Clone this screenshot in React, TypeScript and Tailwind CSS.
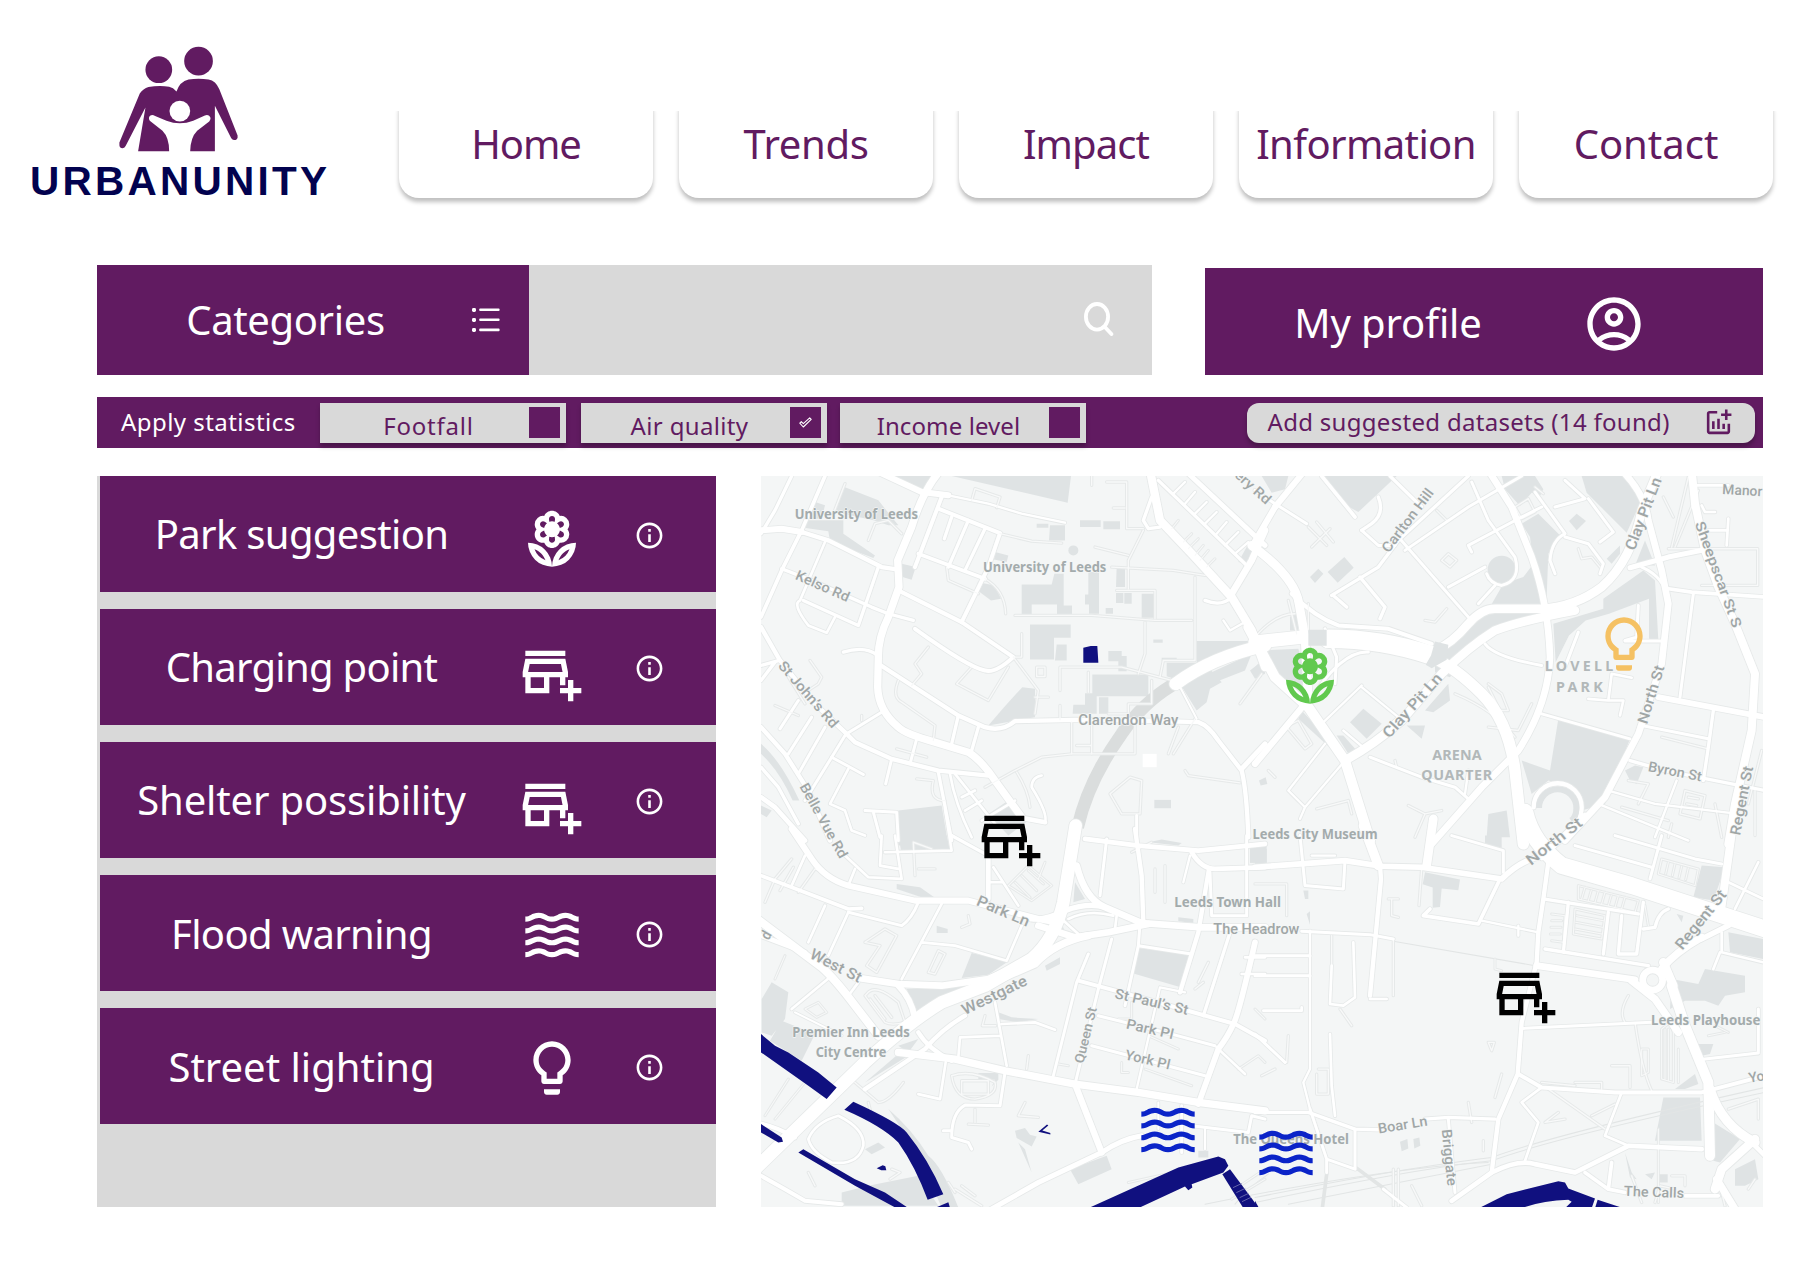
import React from "react";
import {
  MdOutlineAccountCircle,
  MdOutlineAddchart,
  MdOutlineLocalFlorist,
  MdOutlineAddBusiness,
  MdWaves,
  MdLightbulbOutline,
  MdInfoOutline,
} from "react-icons/md";

/* ---------- map data: four tiles that share one 3x unit grid ---------- */

type Road = [number, string];
type Label = [number, number, number, string, number, number, "poi" | "road" | "area"];
type Tile = { x: number; y: number; areas: string[]; roads: Road[]; paths: string[]; water: string[]; labels: Label[] };

const NW: Tile = {
  x: 0,
  y: 0,
  areas: [
    "M400 17H548L510 75Z", "M590 17H948L938 97Z", "M268 50L370 90 430 165 400 165 355 150 240 125Z",
    "M180 95l30 10-10 40-45 0z M150 150h115v40l95 65-5 8-130-50-5-30-68-10z",
    "M440 280l42 10-12 38-40-12z", "M668 335l50 10 20 40-30 5-40-30z",
    "M845 160h35v12h-35z M885 165h45v45h-48z M975 150h62v20h-62z M1045 153h50v24h-50z",
    "M940 240a15 15 0 1 0 30 0a15 15 0 1 0-30 0z", "M720 245l40 10-5 20-38-8z",
    "M800 342h90l8-32h28v95h25v27h-45v-30h-76v30h-30z", "M1000 305h32v125h-30v-28h-12v-30h10z",
    "M1085 290h25v60h-27z M1083 368h22v30h-22z M1108 368h22v32h-22z M1160 370h38v72h-38z M1052 413h22v17h-22z",
    "M825 462h122v40h-50v65h-72z M905 522h30v48h-35z",
    "M1060 542h40v15h15v45h-25v-30h-30z M1195 507h28v10h-28z M1220 562h45v10h-45z",
    "M1012 612h168v65h-168z", "M955 703h35v-35h35v62h-72z M1032 680h28v50h-28z",
    "M747 710l55-60 38 5v85l-140 25z", "M1325 512h165l-100 60-110 60-45-15 0-40h90z",
    "M1275 640l85-50 40 45-35 20-10 40-30 25z", "M1370 605l120-55-20 50-90 35z", "M1485 600l45-35v45l-30 15z",
    "M1198 988h50v25h-50z", "M430 1020l130-15 20 120h-150z", "M700 1030l60-40 60 60-60 45z",
    "M18 820q60 50 115 170l-20 0q-40-90-95-140z", "M18 1005l32 15-15 20-17-10z", "M1450 275l25-45 20 0 5 40-25 10z",
  ],
  roads: [
    [22, "M548 10Q500 70 470 170L428 270 432 350 400 440Q370 500 370 560L368 650Q370 720 430 770Q450 790 540 815L640 845Q680 870 720 930L800 1040"],
    [14, "M790 1040L870 1055"], [18, "M360 0L500 65 580 75"], [18, "M18 180L80 175 140 185"], [13, "M140 185L220 210 380 290 425 297"],
    [7, "M580 75L700 100 800 130 930 157"], [10, "M110 17L60 120 18 190"], [11, "M210 17L140 180 80 300 18 440"],
    [10, "M80 295L170 330 350 410 400 430 475 450"], [10, "M370 290L310 465 145 390"], [8, "M210 215L135 390Q110 400 160 465L215 487 240 440"],
    [12, "M560 80L480 290"], [12, "M550 115L735 188 700 290 620 455"], [10, "M640 150L580 290M690 175L630 300M590 140L568 205"],
    [11, "M490 250L690 325"], [5, "M690 325Q750 360 752 430M735 190L830 212 920 218"],
    [12, "M430 360L500 395 620 455 775 560Q720 610 690 600Q640 590 480 475"], [10, "M265 545Q330 525 368 555"],
    [13, "M370 580L610 735 690 770Q740 785 780 752L960 748 1150 750 1330 755Q1360 765 1390 810L1460 900Q1475 960 1480 1100"],
    [10, "M610 735L590 820M670 770L650 840"], [5, "M775 560L850 660 840 730M430 630Q410 680 440 695L540 765 535 810M760 590L700 690 605 640 650 590M520 530L480 580 500 610 470 645"],
    [13, "M18 470L75 570 180 700 275 790 300 815 410 865 550 900 700 915"], [9, "M275 790L380 725"],
    [9, "M270 795L230 860 150 990M75 775L130 690M100 850L170 740M130 910L210 770"], [9, "M230 860L325 912M410 865L392 940M485 805L465 880"],
    [8, "M280 895L225 1000 270 1020 290 1080 330 1095"], [10, "M18 585l55-15M18 630L60 575"], [13, "M18 770L90 850 160 960 225 1110"],
    [14, "M18 980L60 1010 150 1110"], [10, "M18 890L70 950 130 1060"], [9, "M330 1020L425 1025 430 1110M355 1025L375 1100"], [10, "M550 905L590 1110"],
    [8, "M600 910L720 1060M620 980L660 960M630 1020L680 990M680 1050L780 990M585 910Q600 1000 650 1100"],
    [5, "M690 950L780 900 860 860 950 850H1140V760M785 905Q820 960 825 1010M165 570L200 620 190 640 160 660M320 750L320 735"],
    [8, "M870 1055Q880 1030 830 950Q830 920 860 915"], [5, "M950 755V850M1010 760V850M915 590V660M915 590H1100L1250 630M800 490V560L775 560M965 825H1010"],
    [5, "M780 435H1010L1200 450H1310M1170 455V550L1150 610M1320 320V570H1225L1215 620M1070 290L1255 300 1350 315"],
    [5, "M1115 35V175H1165M1055 35H1115M1075 113H1110M1010 17V45M1165 180L1120 270V355M1020 230L1120 255M1085 360H1200V445"],
    [5, "M650 90L660 55 735 80 725 112M270 40L235 130M340 210L360 160 400 150 440 190M575 290L580 330 670 370"],
    [5, "M845 590h25v28h-25v-28M915 705V748M1190 630V700H1120V725M1000 605V665M840 680H880M1060 730H1120"],
    [5, "M485 925L535 930Q520 990 570 990M425 835L515 860M60 705L130 735M100 620L150 700"],
    [25, "M1185 0L1215 150 1310 250 1430 380 1490 480 1530 590"], [10, "M1210 30L1480 290"], [15, "M1290 0L1530 225"],
    [7, "M1255 70L1290 35M1290 100L1320 65M1320 130L1355 95M1350 160L1385 125M1385 190L1415 155M1410 225L1450 185M1440 250L1480 215"],
    [4, "M1250 175L1270 150M1285 215L1310 190M1300 235L1330 205M1320 255L1345 225M1335 270L1360 240M1355 290L1380 265"],
    [10, "M1190 80L1165 150 1180 175 1215 170"], [20, "M1530 180L1490 270 1430 370"], [10, "M1430 380Q1400 410 1350 390"],
    [7, "M1470 455L1425 480 1405 450"], [5, "M1290 900L1300 915 1455 937M1160 930L1125 920 1065 970 1100 1030 1155 1030 1160 930"],
    [9, "M1145 1035V1110"], [5, "M1270 770L1240 850M1320 745L1255 850M1455 700L1520 610"], [15, "M1530 820L1460 895"], [6, "M1325 745L1270 640"],
    [38, "M1262 640Q1370 560 1530 525"],
  ],
  paths: ["M1250 645Q1160 700 1100 790Q1000 930 968 1070"],
  water: ["M985 532l22-5h20l3 50h-45z"],
  labels: [
    [304, 131, 0, "University of Leeds", 370, 43, "poi"], [869, 290, 0, "University of Leeds", 370, 43, "poi"],
    [203, 347, 24, "Kelso Rd", 172, 42, "road"], [160, 672, 49, "St John’s Rd", 250, 42, "road"],
    [206, 1050, 61, "Belle Vue Rd", 250, 42, "road"], [1120, 748, 0, "Clarendon Way", 300, 42, "road"], [1494, 50, 42, "ery Rd", 130, 42, "road"],
  ],
};

const NE: Tile = {
  x: 1500,
  y: 0,
  areas: [
    "M200 17H425L310 125 255 95Z", "M20 17h80l-10 40-40 10z", "M740 17h100l25 40-10 20-25-10-35 40-45-50z", "M980 17h150l35 60-50 110-60-60-60-60z",
    "M800 160l50-30 70 70-40 50-5 130-20 30h-150l40-70 60-20 30-40-10-80z", "M698 298a42 42 0 1 0 84 0a42 42 0 1 0-84 0z",
    "M965 130l28 22-28 28-23-28z", "M218 305l50-45 28 32-48 45z M165 320l25-25 15 15-25 28z", "M20 540l110-5 30 100-30 60-60-60z",
    "M0 590l20-20v50z", "M325 715l55 45-45 45-50-50z", "M140 720l120 130-20-5-110-100z", "M105 440l20-20 5 60h-25z",
    "M910 745L1125 805 1050 1000 980 1020 960 950 880 930 830 970 800 870 885 900Z", "M715 430h130l-80 20-120 80-60 90-45-15 0-50 50-30Q660 430 715 430z",
    "M895 460l150-45 0-30 120-85 35 30 10 180-28-5 0-120-120 45-70 20-50 45-40 80z", "M1170 210l30 75-60 0z", "M1055 265l40-40 0 25-25 30z",
    "M510 720l70-80 5 50-50 35z M455 765h55l-10 40z", "M700 1030l55-10 10 80h-70z", "M1110 900l30-15 25 5-20 50-20-10z", "M245 795l20 0 40 45-25 10z", "M12 930l20-10 5 20-20 5z",
  ],
  roads: [
    [5, "M1240 235H1508V345H1340M780 110l40-25 20 40-40 20zM580 250l25 20-20 20-25-20zM600 670Q720 720 780 800M0 500Q60 430 120 430M840 50l25 20"],
    [5, "M170 230L225 175M185 155L235 215M160 170L215 225M545 120L575 150M510 450L540 455 575 415M970 235L980 265 1010 260 1035 290M1225 80L1255 140"],
    [5, "M700 640L740 670 760 720 735 720 700 650M700 770L790 780 830 700M90 770L130 750 170 820 150 835 95 770M40 900L60 920M420 870L425 890M185 1015L280 990L290 1030"],
    [5, "M1220 800L1360 835M1100 1010L1240 1050M1120 930L1180 940 1150 1000M1290 960l60 15-15 70-60-15zM1300 980l30 5M1295 1000l30 5M460 1005L510 1030 480 1100M510 1030L560 1020"],
    [5, "M1300 20L1250 230M1330 60L1260 230M1500 960V1095M1520 840L1480 1000M1250 1060L1240 1100M1380 1000L1400 1100"],
    [26, "M-10 225Q120 320 132 400L150 500 160 690"], [30, "M-20 470L60 620 160 710 270 870 345 1110"], [19, "M150 700L0 880"],
    [40, "M0 515L140 500"], [56, "M220 505Q380 505 530 555"], [26, "M540 540Q590 520 640 460Q680 415 720 415L860 415Q960 410 1040 350Q1130 270 1160 120L1210 0"],
    [26, "M270 870Q360 820 440 750L560 610Q640 530 720 480Q800 450 960 420"], [34, "M530 560Q600 590 680 670Q760 750 780 900L805 1120"],
    [20, "M700 0L770 110 830 260Q880 400 885 560Q880 700 790 840L680 950 530 1120"], [12, "M110 370Q180 440 250 465L400 475 530 520"],
    [9, "M430 200L640 440M580 350L690 290M720 345L670 400"], [11, "M200 17L300 140"], [18, "M60 110L-10 230"], [18, "M60 110L150 0"], [9, "M0 60L60 100 155 160"],
    [9, "M320 180L370 225 420 225"], [10, "M370 290L430 210 640 17M230 375L370 290M235 375L275 410M315 320L390 410 375 445"],
    [10, "M405 17L500 110M370 80Q390 130 350 160L320 180"], [9, "M450 240L640 110 800 17"], [9, "M650 35L700 150 780 260Q800 330 740 345Q705 340 695 310"],
    [9, "M800 140L640 225 650 245M780 150L860 110"], [9, "M840 65L930 190Q890 210 885 270L900 310M930 200L1000 220 1045 280 1035 310"],
    [9, "M1000 85L1075 185 1035 215M900 110L990 85 930 30"],
    [20, "M1100 0Q1170 70 1180 150L1220 300 1240 400 1220 580 1150 790 1050 980 930 1110"], [15, "M1125 292L1240 260 1340 240"],
    [24, "M1310 0L1320 100 1350 240 1390 350 1440 460 1500 610L1490 780 1440 1000 1420 1120"],
    [8, "M1310 45H1420M1340 105L1350 125H1380M1360 180H1415M1420 145L1415 225"], [11, "M1240 355L1310 365 1530 380"],
    [9, "M1315 370L1275 680M1110 512H1220"], [9, "M1160 290Q1230 320 1240 390"], [17, "M1210 680L1530 740"], [10, "M1375 720L1360 830 1345 930"],
    [9, "M860 730L1125 805M1160 765L1360 805"], [10, "M1125 870L1230 900 1530 960"], [9, "M690 520Q720 560 860 585"], [9, "M970 485L930 590"],
    [9, "M1150 405L1145 500 1110 510"], [8, "M1000 685L1060 690 1070 610 1130 622M1060 690L1105 690 1095 735"], [9, "M345 860L500 920 600 950 640 985"],
    [7, "M210 820L100 960 150 1010 270 870M150 1010L135 1045M320 650L430 740M200 760L320 645M265 780L330 835M430 740L335 830"],
    [7, "M1030 1000L1300 1110M1060 960L1200 1000 1450 1030M1265 930L1200 1100M630 970L640 900"],
    [9, "M210 475L245 560 240 640M165 690Q260 540 340 545"], [5, "M100 390L125 490M160 400V480"],
    [13, "M836 1010A72 72 0 0 1 980 1010A72 72 0 0 1 940 1075"],
  ],
  paths: [],
  water: [],
  labels: [
    [458, 150, -53, "Carlton Hill", 228, 42, "road"], [1165, 130, -69, "Clay Pit Ln", 230, 46, "road"], [1462, 60, 3, "Manor", 120, 42, "road"],
    [1390, 312, 70, "Sheepscar St S", 335, 42, "road"], [972, 586, 0, "LOVELL", 205, 43, "area"], [973, 650, 0, "PARK", 140, 43, "area"],
    [472, 705, -48, "Clay Pit Ln", 242, 46, "road"], [1188, 672, -73, "North St", 180, 44, "road"], [606, 854, 0, "ARENA", 148, 43, "area"],
    [605, 914, 0, "QUARTER", 213, 43, "area"], [1260, 903, 11, "Byron St", 163, 42, "road"], [1460, 990, -79, "Regent St", 210, 44, "road"],
    [180, 1091, 0, "Leeds City Museum", 375, 43, "poi"], [897, 1112, -38, "North St", 200, 46, "road"],
  ],
};

const SW: Tile = {
  x: 0,
  y: 1095,
  areas: [
    "M430 0h145l10 45-145 10z", "M425 145l70 10 50 35-30 0-90-30z", "M650 352l110 25-60 40-80 10z", "M455 460l200-10-170 85z", "M1150 337l155 20-28 98-147-43z",
    "M50 440l50 30-10 80-40 50-30-10v-100z M80 555l100 40-40 80-95-60z", "M1485 30h50v52h-50z", "M960 140l30 50-35 10z M910 240l25 60-40-10z M870 390l45-25v20l-40 20z",
    "M545 270l33 10v12h-33z", "M340 1050l150-30 60 90h-290v-40z", "M400 820Q470 880 520 960Q560 990 610 1115H560L510 1000 440 880Z", "M330 740l130-80-30-5z",
    "M945 1000l110-40 15 40-100 45z", "M780 885l30-8 15 20 20 5-15 30-45-25z M790 920l20 20 20 70z", "M670 712h60v20l-20 20 10-20h-50z", "M1180 20l40-8 60 10-10 8z",
    "M730 530l40 15 80 5-60 10-60-10z", "M330 940l40-20 20 15-40 20z", "M430 630l60-20-30 40z", "M1270 245l45 5v12l-45-5z", "M1330 945h30v20h-30z",
  ],
  roads: [
    [5, "M590 720Q650 700 720 740Q730 780 660 790Q600 790 590 720M620 735h80v40h-80zM335 475Q360 440 430 500L450 560Q410 570 390 560L330 480ZM360 480L410 545M345 490L390 550M370 800L300 740M370 800Q400 800 445 740"],
    [4, "M760 150l60-60 70 60-60 45zM780 140l45 45M800 120l45 45M820 105l45 40M870 80L850 130M30 840L100 730M60 850L150 740M90 360L60 430M150 520l40-20 25 30-30 15z"],
    [5, "M330 320l60-40 35 20-60 110-30-20 40-60-45-10M550 345l20 10-30 60-20-5zM690 540l-8 30h40M660 820V860M640 865L700 868M810 800L790 840 850 845M820 660L815 700M410 1000l25 10-30 20"],
    [5, "M60 130l-30 70M75 165l40-70M130 170l50-70 30 10M640 240l5 25-25 10M480 120L475 20 530 40M490 100h50M1190 20l-60 30M1200 100V170M1230 90V200M1345 440L1320 460M1360 380l-30 60"],
    [4, "M1170 700L1310 750M1180 600L1270 640M1090 550h40M1130 560V500M1450 700l60-40 20 20M1500 520l30 30M940 690L910 685M1100 680v30h20M1120 1040L1300 1000M1440 1060L1530 1000M1430 1090L1530 1030"],
    [5, "M110 70L60 130M600 1060L680 1110M620 1050L660 1080M580 1040L600 1070M340 800L350 840M160 1010L180 1050"],
    [8, "M280 150L300 100M440 130L340 125 270 60M420 0L440 130M380 0L375 90 430 100M390 50L590 45 570-80"], [10, "M590 0L700 60"],
    [18, "M110-20L170 70Q210 130 280 150L480 195 640 195 850 250 900 260"], [11, "M18 120L110 155 280 220L320 218"], [9, "M280 230L440 270Q470 250 490 200"],
    [8, "M110 150L150 60M210 210L160 320M280 230L220 360M560 205L440 430M500 320L600 330 755 375 800 270"], [14, "M700 60V190"], [8, "M715 95L790 210M700 140H740"],
    [20, "M965 90Q990 190 1050 215L1160 262 1340 275 1530 275"], [16, "M830 250Q870 255 930 225Q1000 200 1050 215"], [20, "M850 270L960 305 1060 290 1180 265"],
    [22, "M1000 300Q900 320 840 385L690 450"], [8, "M920 250L970 295M1085 240L1080 280M940 250Q1000 220 1075 240"],
    [38, "M962-30L925 200Q900 310 830 370L690 450 560 500Q460 560 330 680L0 1000"],
    [24, "M0 245L200 395Q240 430 300 510L370 600"], [14, "M18 300L150 350"], [20, "M300 425L430 445 560 450 700 430 800 385"], [8, "M230 420L110 520M310 440L280 480"],
    [13, "M1140-20L1160 120 1165 260"], [9, "M1055 10L1035 180"], [14, "M990 10L1150 30 1330 45 1480 30 1530 25"], [14, "M1310 50Q1340 100 1380 100L1530 95"], [13, "M1362 100L1330 290 1275 470"],
    [7, "M1305 60L1285 140"], [9, "M1475 0V240H1370L1365 110"], [9, "M1155 265L1150 330 1110 510M1150 330L1310 355"], [9, "M1070 310L1030 460 960 745"], [9, "M1000 355L965 440 895 720"],
    [12, "M970 435L1100 470 1280 520 1440 565L1530 615"], [9, "M1030 540L1230 590 1380 630"], [9, "M1010 630L1350 720"], [7, "M1215 455L1145 760M1215 455L1290 470"],
    [17, "M1500 320Q1450 540 1435 565Q1420 600 1390 640L1330 805"], [10, "M1430 275L1345 540"], [8, "M1385 635L1470 715"], [8, "M1470 365h60M1460 415h70"],
    [22, "M430 650L600 670 750 705 960 745 1150 770 1330 800 1530 825"], [18, "M430 450Q470 490 480 550"], [13, "M490 590Q520 640 590 675M630 540Q560 580 510 640L330 760"],
    [8, "M720 500L755 690M610 665L615 605 735 600M740 565L840 560 900 582"], [8, "M572 680L555 790 490 775"], [9, "M750 710L735 810 630 808Q590 830 590 905L640 920 650 940M565 885h25"],
    [19, "M960 745L1040 950"], [15, "M1160 900Q1100 910 1040 950L850 1040 700 1125"], [9, "M1310 870L1480 890M1280 810V950M1480 890L1490 840 1530 850"],
    [6, "M1350 880V940M1210 800V880M120 530L260 600"], [12, "M0 860Q60 870 120 905M18 1020L90 1060 150 1095 260 1105"],
    [8, "M160 910Q180 860 250 840Q330 880 325 930Q310 990 230 980Q170 950 160 910"],
  ],
  paths: [],
  water: [
    "M18 595L60 630 100 650 190 710 245 755 215 790 160 750 18 650Z", "M268 822L295 798Q430 860 455 890Q520 970 565 1075L518 1092Q480 990 430 920Q380 870 268 822Z",
    "M538 1117l42-18 6 20z", "M18 865L80 905 84 918 70 920 18 890Z", "M130 950L145 940 300 1030 390 1070 465 1120H430L300 1050Z", "M365 997l18-9 8 3 3 12-15 0z",
    "M850 888l26-22 4 3-18 15 24 8v4z", "M1000 1117L1270 995 1390 962 1410 970 1420 990 1405 1010 1310 1045 1312 1055 1300 1063 1290 1052 1150 1117Z",
    "M1402 1015L1425 1000 1512 1117H1465Z",
  ],
  labels: [
    [745, 226, 23, "Park Ln", 168, 46, "road"], [1418, 200, 0, "Leeds Town Hall", 320, 43, "poi"], [1504, 281, 0, "The Headrow", 258, 42, "road"],
    [243, 390, 27, "West St", 168, 46, "road"], [718, 478, -26, "Westgate", 212, 46, "road"], [1190, 498, 13, "St Paul’s St", 225, 42, "road"],
    [1185, 580, 13, "Park Pl", 145, 42, "road"], [1178, 672, 13, "York Pl", 138, 42, "road"], [992, 598, -76, "Queen St", 172, 40, "road"],
    [288, 590, 0, "Premier Inn Leeds", 352, 43, "poi"], [288, 649, 0, "City Centre", 212, 43, "poi"], [33, 298, -60, "d", 22, 44, "road"],
    [1608, 909, 0, "The Queens Hotel", 347, 43, "poi"],
  ],
};

const SE: Tile = {
  x: 1500,
  y: 1095,
  areas: [
    "M0 30l35 10v45h-35z", "M510 110l105 22-5 32-50-5-5 55-22 2v-60l-30-10z", "M690 0h50v40l-50-15z", "M1340 90l70 5-35 100-60-10z", "M1420 290l105 20v60l-100-20z",
    "M1250 430l80 15 20-45 120 20v50l-60 10-20 30-40-15-60 0-45 25z", "M1325 625l50 0-10 30-25 5z", "M1225 785h110l5 130h-140z", "M1375 860l80 50-60 70-20-5z",
    "M1440 1000l60-30 10 60-40 20-30 0z", "M1110 950l20 60 15 20-20-5z M1210 1015h28v25h-28z M1170 1015l30-5-10 20z", "M435 918l22-8 3 28-20 8z M475 910l18-5 3 25-18 8z",
    "M145 165h15v25h-10z M155 235l10-8v40z", "M1260 760l60-45 10 30-40 15z", "M1265 235l20 5-5 20z",
  ],
  roads: [
    [5, "M0 145H95V240M230 300V390M415 310V480M400 190H430M410 190V240L430 245M255 520L290 570M700 620l18 0-8 25zM740 715l-20 70M500 100L492 210M60 700L20 720M100 600L95 680M190 700h30v75h-35v-60"],
    [4, "M970 150l180 45-10 35-170-40zM990 155l-10 35M1010 160l-10 35M1030 165l-10 35M1050 170l-10 35M1070 175l-10 35M1090 180l-10 35M1110 185l-10 35M960 220l90 20-10 70-85-15zM965 240l80 15M962 260l80 15M960 280l80 15"],
    [4, "M890 235l40 5-5 80-35-5M890 255h30M888 275h30M886 295h30M1220 70l110 30-10 50-110-35zM1240 80l-8 35M1260 85l-8 35M1280 92l-8 35M1300 97l-8 35"],
    [5, "M1120 480Q1090 530 1110 560M1140 560Q1160 700 1190 765M1070 690h55v65M860 740l100 10M960 740h80v20M880 760L1050 880M930 850l-60 10 40-30M1010 840l70-35M640 800l10 60M685 915v30M415 1000v110M430 1000v110M470 1050L500 1110"],
    [4, "M1160 640l20 0v70l-20 10zM1220 580l25-20 10 30v150l-35-10zM1230 580V730M1240 580V735M1270 640V740M1380 570l40 20M1360 600l50-10M720 370v30l20 5M1170 210L1180 270M1210 880V1100"],
    [5, "M1130 1020L1160 1100M1200 1100L1215 1050 1260 1060M1250 1020h40v30M1410 1110L1395 1050M1500 1030L1480 1060M1420 820L1510 790V850"],
    [17, "M0 95L270 75 380 92 500 95 740 130Q800 70 870 60"], [13, "M375 90L378 130 345 480"], [28, "M325-30L370 90"], [26, "M535-50L515 90"],
    [50, "M810-70Q830 20 920 90L1130 150 1530 280"], [18, "M860 65L990-60"], [9, "M135 0L150 150 265 160 270 75"], [9, "M590 0L745 45 745 110"], [11, "M735 130L670 265 505 240 525 220"],
    [7, "M680 255L850 290M790 270V300"], [13, "M880 80L865 190 850 290 845 380 800 560 788 715 730 850 710 1010"],
    [10, "M865 190L1150 235M940 200L925 350M870 340L1180 390M1060 230L1045 355M1100 240L1090 355H1145L1165 200M1165 280L1200 275Q1210 230 1240 220"],
    [20, "M845 390L1140 432"], [22, "M1130 435L1200 490 1270 590"], [22, "M1220 400Q1260 350 1340 305"], [16, "M1340 310L1420 270"], [30, "M1250 450L1290 570 1360 740 1365 960"],
    [26, "M1225 380L1255 450"], [24, "M1432-20L1400 210"], [9, "M960 30L1190 95M1220 0L1185 130M1080 0L1320 70 1400 85"], [9, "M800 578L1190 560"], [9, "M1330 672L1510 652V520"],
    [12, "M790 715L860 755 1080 770 1340 770 1530 720"], [28, "M1365 760Q1400 870 1500 920"], [26, "M1500 910L1400 1000 1380 1060"], [22, "M1385 1030L1440 1120"], [14, "M1480 910L1530 960"],
    [8, "M860 755L800 800 850 860 810 975M1100 770L1050 900L1120 930"], [14, "M590 1095L710 1010Q790 970 840 985L960 1010 1120 930 1340 940"],
    [11, "M990 1010L1060 1060 1110 1070M1290 1080H1390M1060 1060L1070 980"], [10, "M0 830H160L300 880 370 882M510 850L580 845 720 850"],
    [9, "M165 820L215 970 300 1000V880M215 970V1010"], [7, "M165 285V700L145 740 165 820M240 60L170 60"], [9, "M0 360H165M0 420H165M140 287L345 297 415 310"],
    [8, "M230 390L225 505 265 510 300 485 295 320M25 525H140V515M225 595L230 750 240 840M345 490H395"], [9, "M0 595L90 680"], [9, "M385 1060L455 1115M580 850L600 1070"],
    [8, "M1400 290L1400 350 1525 380M1395 350L1375 400M1420 140L1525 190M1510 80L1440 220"],
    [20, "M1163 433a30 30 0 1 0 60 0a30 30 0 1 0-60 0"],
  ],
  paths: [],
  water: ["M672 1117L755 1075 910 1036 930 1040 940 1058 1020 1088 1010 1117H930L950 1098 940 1092Q860 1095 800 1117Z", "M1028 1092L1105 1117H1020Z", "M0 1095l12 22H0z"],
  labels: [
    [1337, 252, -51, "Regent St", 215, 46, "road"], [1352, 553, 0, "Leeds Playhouse", 328, 43, "poi"], [1522, 720, -10, "York", 84, 42, "road"],
    [443, 867, -9, "Boar Ln", 150, 42, "road"], [583, 965, 84, "Briggate", 170, 42, "road"], [1197, 1069, 2, "The Calls", 180, 42, "road"],
  ],
};

const tiles = [NW, NE, SW, SE];

function CityMap() {
  const shift = (t: Tile) => `translate(${t.x} ${t.y})`;
  return (
    <svg viewBox="18 17 3006 2193" className="block h-full w-full" preserveAspectRatio="none" strokeLinecap="round" strokeLinejoin="round">
      <rect x="18" y="17" width="3006" height="2193" fill="#f4f6f6" />
      {tiles.map((t, i) => (
        <g key={i} transform={shift(t)} fill="#dfe3e4">
          {t.areas.map((d) => <path key={d} d={d} />)}
        </g>
      ))}
      {tiles.map((t, i) => (
        <g key={i} transform={shift(t)} fill="none" stroke="#dadddd" strokeWidth="38" strokeLinecap="butt">
          {t.paths.map((d) => <path key={d} d={d} />)}
        </g>
      ))}
      <g fill="none" stroke="#e2e5e5" strokeWidth="3">
        <path d="M1500 2195Q2000 2090 2210 2070Q2400 2000 3030 1865" />
        <path d="M1500 2180Q1950 2090 2210 2060Q2400 1990 3030 1850" />
        <path d="M1350 2200Q1900 2090 2200 2075M1600 2200Q2000 2120 2210 2080M1440 2200Q1480 2150 1540 2110" />
        <path d="M1915 1412L2340 1485" />
        <path d="M1715 2110L1702 2212M1805 2092L1890 2155" strokeWidth="11" />
      </g>
      {tiles.map((t, i) => (
        <g key={i} transform={shift(t)} fill="none" stroke="#e6e9e9">
          {t.roads.map(([w, d]) => <path key={d} d={d} strokeWidth={w + 5} />)}
        </g>
      ))}
      {tiles.map((t, i) => (
        <g key={i} transform={shift(t)} fill="none">
          {t.roads.map(([w, d]) => <path key={d} d={d} strokeWidth={w <= 5 ? w - 1 : w} stroke={w <= 5 ? "#f8f9f9" : "#ffffff"} />)}
        </g>
      ))}
      <path d="M2352 1012A56 56 0 0 1 2464 1012Q2464 1040 2448 1050" fill="none" stroke="#dfe3e4" strokeWidth="18" strokeLinecap="butt" />
      <path d="M1660 478h55v48h-55z M2028 555l12-42 40 10-5 45-45 25-18-10z" fill="#dfe3e4" />
      <rect x="1163" y="850" width="42" height="40" fill="#ffffff" />
      {tiles.map((t, i) => (
        <g key={i} transform={shift(t)} fill="#10107f">
          {t.water.map((d) => <path key={d} d={d} />)}
        </g>
      ))}
      <path d="M1435 2150l25-12M1445 2165l25-12M1455 2180l25-12M1462 2192l25-12" stroke="#8c8cc0" strokeWidth="2" />
      {tiles.map((t, i) => (
        <g key={i} transform={shift(t)} textAnchor="middle">
          {t.labels.map(([x, y, r, text, w, size, kind]) => (
            <text
              key={text + x}
              transform={`translate(${x} ${y}) rotate(${r})`}
              y={size * 0.34}
              fontSize={size}
              textLength={w}
              lengthAdjust={kind === "area" ? "spacing" : "spacingAndGlyphs"}
              className={kind === "road" ? "font-[Roboto,sans-serif] font-medium" : "font-['Noto_Sans',sans-serif] font-bold"}
              fill={kind === "road" ? "#a0a6a6" : kind === "area" ? "#b2b8b9" : "#a3abac"}
              stroke="#f4f6f6"
              strokeWidth="4"
              paintOrder="stroke"
            >
              {text}
            </text>
          ))}
        </g>
      ))}
    </svg>
  );
}

/* ---------- brand ---------- */

function Logo() {
  return (
    <div className="w-[399px] shrink-0 pt-[43.5px] pl-[28px]">
      <svg viewBox="355 70 365 325" className="ml-[90px] block h-[108.5px] w-[122px]">
        <g fill="#611b61">
          <circle cx="477" cy="147" r="40" />
          <circle cx="596" cy="121" r="43" />
          <path d="M359 370Q358 382 369 382Q375 382 378 375L437 260L415 391H508Q508 350 488 330L450 300Q444 290 452 284Q458 280 466 286L500 300Q540 315 580 300L615 284Q628 280 632 292Q632 298 628 302L592 330Q572 350 571 391H645V255L694 352Q700 360 709 357Q715 352 713 344L658 205Q648 180 626 176Q596 172 566 176Q540 182 530 212Q520 200 508 198Q478 193 446 199Q430 204 420 218L359 365Z" />
        </g>
        <circle cx="540" cy="271" r="31" fill="#ffffff" />
      </svg>
      <div className="mt-[7px] ml-[2px] font-['Liberation_Sans',sans-serif] text-[40.5px] leading-[44px] font-bold tracking-[3.25px] whitespace-nowrap text-[#02024f]">
        URBANUNITY
      </div>
    </div>
  );
}

const nav = [
  ["Home", "tracking-[-1.1px]"],
  ["Trends", "tracking-[-0.35px]"],
  ["Impact", "tracking-[-0.9px]"],
  ["Information", "tracking-[-0.6px]"],
  ["Contact", ""],
];

/* ---------- controls ---------- */

function StatToggle({ label, checked, className }: { label: string; checked?: boolean; className: string }) {
  return (
    <div className={`flex h-10 items-center bg-[#d9d9d9] pr-[6px] pl-[8px] shadow-[0_4px_4px_rgba(0,0,0,0.25)] ${className}`}>
      <span className="mt-[6px] flex-1 text-center text-2xl whitespace-nowrap text-[#611b61]">{label}</span>
      <span className="mb-[1px] flex h-[31px] w-[31px] items-center justify-center bg-[#611b61]">
        {checked && (
          <svg viewBox="0 0 13 11" className="h-[11px] w-[13px]" fill="none" stroke="#ffffff" strokeWidth="1.1" strokeLinejoin="round">
            <path d="M.8 6.2L2.3 4.7 4.3 6.6 10.7.8 12.2 2.3 4.3 10Z" />
          </svg>
        )}
      </span>
    </div>
  );
}

const suggestions = [
  { label: "Park suggestion", Icon: MdOutlineLocalFlorist, nudge: "mt-[12px]", track: "tracking-[-0.65px]" },
  { label: "Charging point", Icon: MdOutlineAddBusiness, nudge: "mt-[10px]", track: "tracking-[-0.7px]" },
  { label: "Shelter possibility", Icon: MdOutlineAddBusiness, nudge: "mt-[10px]", track: "tracking-[-0.15px]" },
  { label: "Flood warning", Icon: MdWaves, nudge: "mt-[3px]", track: "tracking-[-0.65px]" },
  { label: "Street lighting", Icon: MdLightbulbOutline, nudge: "mt-[3px]", track: "" },
];

const pins = [
  { Icon: MdOutlineLocalFlorist, place: "left-[517px] top-[169px] text-[#61c94e]" },
  { Icon: MdLightbulbOutline, place: "left-[830.5px] top-[136px] text-[#f5c163]" },
  { Icon: MdOutlineAddBusiness, place: "left-[218px] top-[329px] text-black" },
  { Icon: MdOutlineAddBusiness, place: "left-[733px] top-[486px] text-black" },
  { Icon: MdWaves, place: "left-[375px] top-[622px] text-[#0b24c8]" },
  { Icon: MdWaves, place: "left-[493px] top-[645px] text-[#0b24c8]" },
];

export default function App() {
  return (
    <div className="h-[1280px] w-[1808px] overflow-hidden bg-white font-['Noto_Sans',sans-serif] text-[#611b61]">
      <header className="flex h-[265px] items-start">
        <Logo />
        <nav className="flex gap-[26px] pt-[90px]">
          {nav.map(([item, track]) => (
            <a key={item} className={`h-[108px] w-[254px] rounded-[20px] bg-white text-center text-[40px] leading-[108px] shadow-[0_4px_4px_rgba(0,0,0,0.25)] [clip-path:inset(21px_-8px_-12px_-8px)] ${track}`}>
              {item}
            </a>
          ))}
        </nav>
      </header>

      <main className="ml-[97px] w-[1666px]">
        <div className="flex h-[110px] items-end text-[40px] text-white">
          <button className="flex h-full w-[432px] items-center bg-[#611b61] pl-[88px]">
            <span className="w-[201px] text-center leading-none tracking-[-0.35px]">Categories</span>
            <svg viewBox="0 0 28 26" className="ml-[85.5px] h-[26px] w-[28px]" fill="#ffffff">
              <rect x="0" y="1" width="4" height="4" rx="1.4" />
              <rect x="0" y="11" width="4" height="4" rx="1.4" />
              <rect x="0" y="21" width="4" height="4" rx="1.4" />
              <rect x="7.2" y="1.4" width="20.4" height="2.6" rx="1" />
              <rect x="7.2" y="11.4" width="20.4" height="2.6" rx="1" />
              <rect x="7.2" y="21.6" width="20.4" height="2.6" rx="1" />
            </svg>
          </button>
          <div className="flex h-full w-[623px] items-center justify-end bg-[#d9d9d9] pr-[38px]">
            <svg viewBox="0 0 30 34" className="mb-[2px] h-[34px] w-[30px]" fill="none" stroke="#ffffff" strokeWidth="3.8" strokeLinecap="round">
              <ellipse cx="13" cy="14.8" rx="11.1" ry="12.8" />
              <path d="M20.8 25L27.4 32" />
            </svg>
          </div>
          <button className="ml-[53px] flex h-[107px] w-[558px] items-center bg-[#611b61] pl-[88px]">
            <span className="mt-[3px] w-[190px] text-center leading-none tracking-[-0.1px] whitespace-nowrap">My profile</span>
            <MdOutlineAccountCircle className="mt-[4px] ml-[99px] h-16 w-16" />
          </button>
        </div>

        <div className="mt-[22px] flex h-[50.5px] items-start bg-[#611b61] pt-[6px] pr-[8px]">
          <span className="ml-[24px] w-[175px] text-2xl leading-[38px] tracking-[0.45px] whitespace-nowrap text-white">Apply statistics</span>
          <StatToggle label="Footfall" className="ml-[24px] w-[246px] tracking-[0.75px]" />
          <StatToggle label="Air quality" checked className="ml-[15px] w-[246px] tracking-[0.35px]" />
          <StatToggle label="Income level" className="ml-[13px] w-[246px] tracking-[0.1px]" />
          <button className="ml-auto flex h-10 w-[508px] items-center rounded-[12px] bg-[#d9d9d9] pl-[20.5px] shadow-[0_4px_4px_rgba(0,0,0,0.25)]">
            <span className="mb-[2px] w-[404px] text-left text-2xl leading-[38px] tracking-[0.3px] whitespace-nowrap">Add suggested datasets (14 found)</span>
            <MdOutlineAddchart className="mb-[1px] ml-[31px] h-[31px] w-[31px]" />
          </button>
        </div>

        <div className="mt-[28px] flex h-[731.5px] justify-between">
          <aside className="flex w-[619px] flex-col gap-[16.6px] bg-[#d9d9d9] pl-[2.5px]">
            {suggestions.map(({ label, Icon, nudge, track }) => (
              <div key={label} className="flex h-[116.5px] items-center bg-[#611b61] text-white">
                <span className={`mt-[1px] w-[404px] text-center text-[40px] leading-none whitespace-nowrap ${track}`}>{label}</span>
                <Icon className={`ml-[16.5px] h-16 w-16 ${nudge}`} />
                <MdInfoOutline className="mt-[3px] ml-[49.5px] h-[31px] w-[31px]" />
              </div>
            ))}
          </aside>
          <section className="relative h-[731.5px] w-[1002px] overflow-hidden">
            <CityMap />
            {pins.map(({ Icon, place }) => (
              <Icon key={place} className={`absolute h-16 w-16 ${place}`} />
            ))}
          </section>
        </div>
      </main>
    </div>
  );
}
